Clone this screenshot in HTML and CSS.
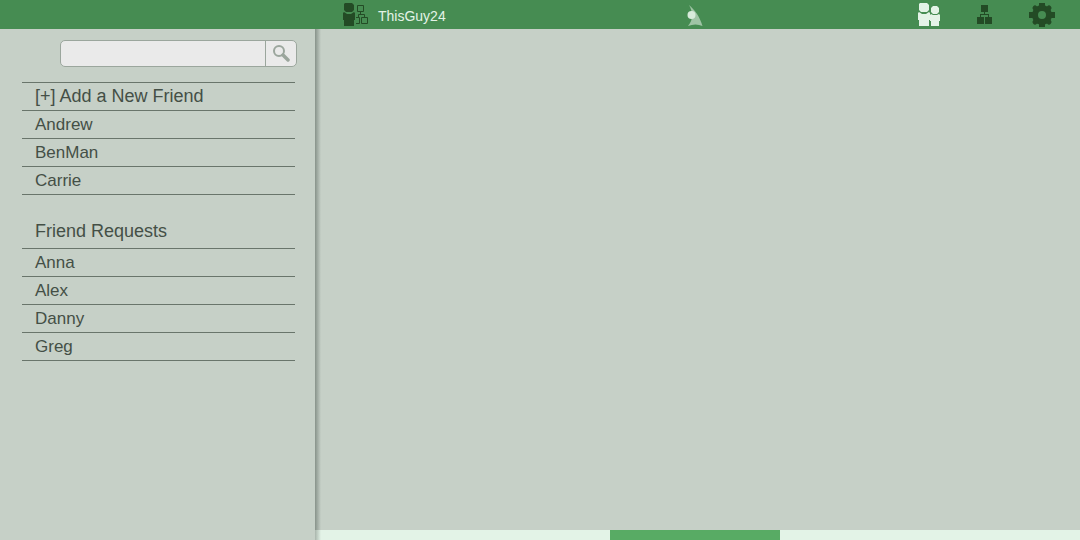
FILE: index.html
```html
<!DOCTYPE html>
<html lang="en">
<head>
<meta charset="utf-8">
<meta name="viewport" content="width=device-width, initial-scale=1">
<title>Friends</title>
<link rel="stylesheet" href="styles.css">
</head>
<body>
<header class="topbar">
  <a class="profile" href="#profile">
    <svg width="26" height="24" viewBox="0 0 26 24" fill="#234b25" aria-hidden="true">
      <path d="M2 0h7l2 2v5L9 9H3L1 7V1z"/>
      <path d="M0 10l1-1 3 2h4l3-2 1 1v7h-1v6H1v-6H0z"/>
      <path d="M14.500 2.500h6v6h-6zM17.500 9v2.500M15.500 14v-2.500h6V14M18.500 14.500h6v6h-6zM13 14.500h3.500v6H13" fill="none" stroke="#234b25"/>
    </svg>
    <span class="profile-name">ThisGuy24</span>
  </a>
  <a class="logo" href="#home" aria-label="Home">
    <svg width="16" height="22" viewBox="0 0 16 22" aria-hidden="true">
      <path d="M2 0C8 5 13 12 15.500 21C11 19 6 19 1 21C4 17 5 14 5 11C5 7 4 3 2 0z" fill="#9fc4a5"/>
      <circle cx="4.500" cy="10" r="4" fill="#d8ebdb"/>
    </svg>
  </a>
  <nav class="tools" aria-label="Main">
    <a href="#friends" aria-label="Friends" aria-current="page">
      <svg width="22" height="23" viewBox="0 0 22 23" fill="#e3f3e7" aria-hidden="true">
        <path d="M2 0h7l2 2v5L9 9H3L1 7V1z"/>
        <path d="M0 10l1-1 3 2h4l3-2 1 1v7h-1v6H1v-6H0z"/>
        <path d="M15 3h4l2 2v4l-2 2h-4l-2-2V5z"/>
        <path d="M12 12l1-1 2 1h4l2-1 1 1v6h-1v5h-8v-5h-1z"/>
      </svg>
    </a>
    <a href="#groups" aria-label="Groups">
      <svg width="15" height="19" viewBox="0 0 15 19" fill="#234b25" shape-rendering="crispEdges" aria-hidden="true">
        <path d="M4 0h7v7H4zM7 7h1v2h4v3h-1v-2H4v2H3V9h4zM0 12h7v7H0zM8 12h7v7H8z"/>
      </svg>
    </a>
    <a href="#settings" aria-label="Settings">
      <svg width="26" height="24" viewBox="0 0 26 24" aria-hidden="true">
        <g fill="none" stroke="#234b25">
          <circle cx="13" cy="12" r="7" stroke-width="6"/>
          <path stroke-width="6" stroke-linejoin="round" d="M13 0v5M13 19v5M0 12h5M21 12h5"/>
          <path stroke-width="5" stroke-linecap="round" d="M6 5l1 1M19 18l1 1M20 5l-1 1M7 18l-1 1"/>
        </g>
      </svg>
    </a>
  </nav>
</header>
<div class="layout">
  <aside class="sidebar">
    <form class="search" role="search">
      <input class="search-field" type="search" aria-label="Search friends">
      <button class="search-button" type="button" aria-label="Search">
        <svg width="18" height="18" viewBox="0 0 18 18" fill="none" stroke="#9ba69d" aria-hidden="true">
          <circle cx="7" cy="6" r="5" stroke-width="2"/>
          <path d="M11 10l5 5" stroke-width="3.500" stroke-linecap="round"/>
        </svg>
      </button>
    </form>
    <ul class="list">
      <li><a class="add" href="#add">[+] Add a New Friend</a></li>
      <li><a href="#andrew">Andrew</a></li>
      <li><a href="#benman">BenMan</a></li>
      <li><a href="#carrie">Carrie</a></li>
    </ul>
    <h2 class="heading">Friend Requests</h2>
    <ul class="list">
      <li><a href="#anna">Anna</a></li>
      <li><a href="#alex">Alex</a></li>
      <li><a href="#danny">Danny</a></li>
      <li><a href="#greg">Greg</a></li>
    </ul>
  </aside>
  <main class="content">
    <div class="track"><div class="thumb"></div></div>
  </main>
</div>
</body>
</html>
```
FILE: styles.css
```css
* {
  box-sizing: border-box;
}

body {
  margin: 0;
  min-height: 100vh;
  display: flex;
  flex-direction: column;
  background: #c6d0c7;
  color: #444f46;
  font-family: "Liberation Sans", Arial, sans-serif;
  font-size: 17px;
}

a {
  color: inherit;
  text-decoration: none;
}

svg {
  display: block;
}

.topbar {
  display: grid;
  grid-template-columns: 1fr auto 1fr;
  align-items: center;
  height: 29px;
  padding: 0 25px 0 343px;
  background: #468c52;
}

.profile {
  display: flex;
  align-items: center;
  gap: 9px;
}

.profile-name {
  padding-top: 2px;
  color: #e3f3e7;
  font-size: 14px;
  line-height: 20px;
}

.logo {
  padding: 2px 8px 0 0;
}

.tools {
  display: flex;
  align-items: center;
  justify-content: flex-end;
  gap: 37px;
}

.layout {
  flex: 1;
  display: grid;
  grid-template-columns: 315px 1fr;
}

.sidebar {
  padding: 11px 18px 20px 22px;
}

.search {
  display: flex;
  height: 27px;
  margin: 0 0 15px 38px;
  overflow: hidden;
  border: 1px solid #9ba69d;
  border-radius: 5px;
  background: #eaeaea;
}

.search-field {
  flex: 1;
  min-width: 0;
  padding: 0 8px;
  border: 0;
  background: transparent;
  color: inherit;
  font: inherit;
}

.search-button {
  display: grid;
  place-items: center;
  width: 31px;
  padding: 0;
  border: 0;
  border-left: 1px solid #9ba69d;
  background: transparent;
}

.list {
  margin: 0 2px 0 0;
  padding: 0;
  border-top: 1px solid #69756b;
  list-style: none;
}

.list li {
  padding-left: 13px;
  border-bottom: 1px solid #69756b;
  line-height: 27px;
}

.list a {
  display: block;
}

.add {
  font-size: 18px;
}

.heading {
  margin: 23px 0 3px;
  padding-left: 13px;
  font-size: 18px;
  font-weight: 400;
  line-height: 27px;
}

.content {
  display: flex;
  flex-direction: column;
  justify-content: flex-end;
  background: linear-gradient(to right, #87928a, #c6d0c7 6px);
}

.track {
  height: 10px;
  padding-right: 6px;
  background: linear-gradient(to right, #a9b5ac, #e3f3e7 6px);
}

.thumb {
  width: 170px;
  height: 10px;
  margin: 0 auto;
  background: #58ab64;
}
```
